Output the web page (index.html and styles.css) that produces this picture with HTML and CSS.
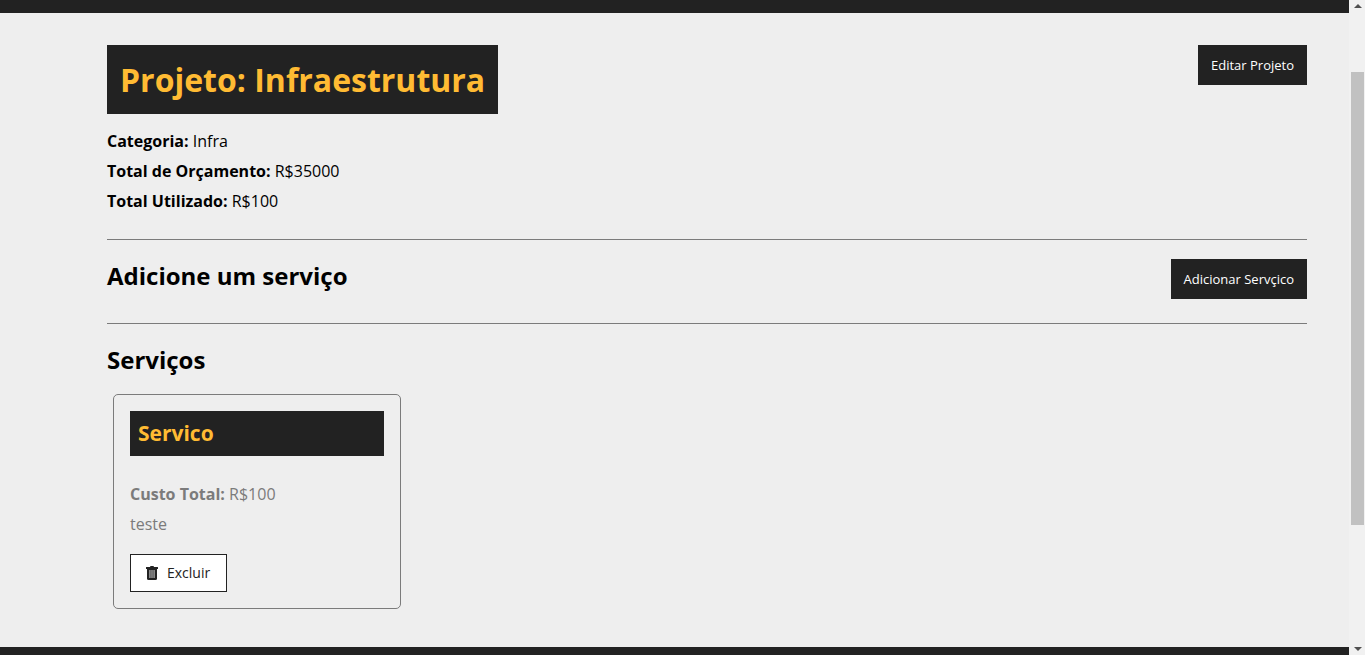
FILE: index.html
```
<!DOCTYPE html>
<html lang="pt-BR">
<head>
<meta charset="utf-8">
<title>Projeto: Infraestrutura</title>
<link rel="stylesheet" href="styles.css">
</head>
<body>
<div class="window">
  <div class="page">
    <header class="bar bar-top"></header>
    <main class="main">
      <div class="container">
        <section class="section details">
          <div class="info">
            <h1 class="title">Projeto: Infraestrutura</h1>
            <p class="line"><span class="label">Categoria:</span> Infra</p>
            <p class="line"><span class="label">Total de Orçamento:</span> R$35000</p>
            <p class="line"><span class="label">Total Utilizado:</span> R$100</p>
          </div>
          <button class="btn" type="button">Editar Projeto</button>
        </section>
        <section class="section add-service">
          <h2 class="heading">Adicione um serviço</h2>
          <button class="btn" type="button">Adicionar Servçico</button>
        </section>
        <section class="services">
          <h2 class="heading">Serviços</h2>
          <div class="cards">
            <article class="card">
              <h3 class="card-title">Servico</h3>
              <p class="line"><span class="label">Custo Total:</span> R$100</p>
              <p class="line">teste</p>
              <button class="remove" type="button">
                <svg class="trash" viewBox="0 0 12 14" aria-hidden="true">
                  <path fill="#222" d="M0 1.300Q0 1 .4 1H4L4.500 0h3L8 1h3.600q.4 0 .4.300v1.700H0z"/>
                  <path fill="#222" d="M1 3h10v9.500Q11 14 9.500 14h-7Q1 14 1 12.500z"/>
                  <path fill="#888" d="M3 4h6v8H3z"/>
                  <path stroke="#444" stroke-width=".6" d="M4.900 4v8M7.100 4v8"/>
                </svg>
                Excluir
              </button>
            </article>
          </div>
        </section>
      </div>
    </main>
    <footer class="bar bar-bottom"></footer>
  </div>
  <div class="scrollbar" aria-hidden="true">
    <svg class="arrow" viewBox="0 0 8 4"><path d="M4 0l4 4H0z"/></svg>
    <div class="track"><div class="thumb"></div></div>
    <svg class="arrow" viewBox="0 0 8 4"><path d="M0 0h8L4 4z"/></svg>
  </div>
</div>
</body>
</html>
```
FILE: styles.css
```
* {
  box-sizing: border-box;
  margin: 0;
  padding: 0;
}

body {
  background: #eee;
  color: #000;
  font-family: "Open Sans", "Noto Sans", sans-serif;
  font-size: 16px;
}

.window {
  display: flex;
  min-height: 100vh;
}

.page {
  display: flex;
  flex: 1;
  flex-direction: column;
}

.bar {
  background: #222;
}

.bar-top {
  height: 13px;
}

.bar-bottom {
  height: 8px;
}

.main {
  flex: 1;
  padding: 32px 0 32px 65px;
}

.container {
  max-width: 1200px;
  margin: 0 auto;
}

.section {
  display: flex;
  align-items: flex-start;
  justify-content: space-between;
  border-bottom: 1px solid #7b7b7b;
  padding-bottom: 24px;
  margin-bottom: 19px;
}

.details {
  padding-bottom: 23px;
}

.title {
  width: fit-content;
  padding: 13px;
  margin-bottom: 12px;
  background: #222;
  color: #ffbb33;
  font-size: 32px;
  font-weight: 700;
  line-height: 43px;
}

.line {
  line-height: 30px;
}

.label {
  font-weight: 700;
}

.btn {
  padding: 0 13px;
  border: 0;
  background: #222;
  color: #fff;
  font: 400 13px/40px "Open Sans", sans-serif;
  cursor: pointer;
}

.heading {
  font-size: 24px;
  font-weight: 700;
  line-height: 33px;
}

.cards {
  display: flex;
  flex-wrap: wrap;
  padding: 18px 6px 0;
}

.card {
  width: 288px;
  padding: 16px;
  border: 1px solid #7b7b7b;
  border-radius: 5px;
  color: #7b7b7b;
}

.card-title {
  padding: 8px;
  margin-bottom: 23px;
  background: #222;
  color: #ffbb33;
  font-size: 21px;
  font-weight: 700;
  line-height: 29px;
}

.remove {
  display: flex;
  align-items: center;
  gap: 9px;
  height: 38px;
  padding: 0 16px 0 15px;
  margin-top: 15px;
  border: 1px solid #222;
  background: #fff;
  color: #222;
  font: 400 14px/20px "Open Sans", sans-serif;
  cursor: pointer;
}

.trash {
  width: 12px;
  height: 14px;
}

.scrollbar {
  display: flex;
  flex-direction: column;
  align-items: center;
  width: 16px;
  padding: 4px 1px 4px 2px;
  background: #f1f1f1;
}

.arrow {
  width: 8px;
  height: 4px;
  fill: #505050;
}

.track {
  display: flex;
  flex: 1;
  flex-direction: column;
  width: 100%;
  padding: 64px 0 122px;
}

.thumb {
  flex: 1;
  background: #c1c1c1;
}
```
